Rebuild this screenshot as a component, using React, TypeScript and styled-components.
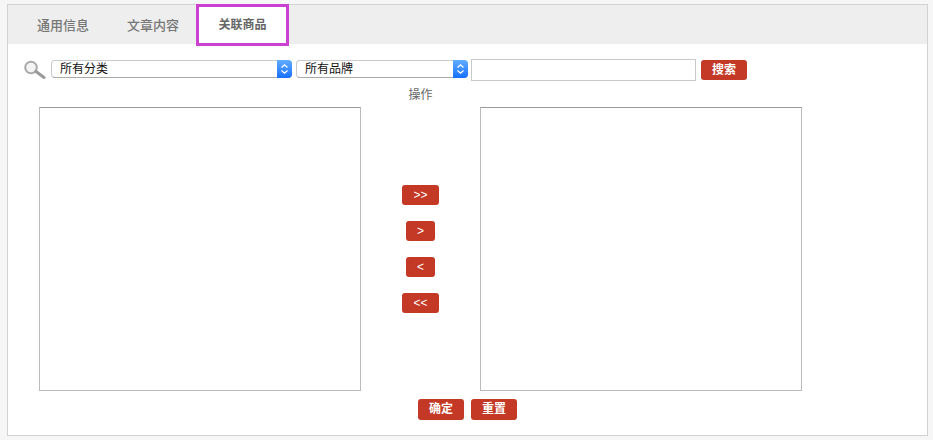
import styled, { createGlobalStyle } from "styled-components";

const GlobalStyle = createGlobalStyle`
  html, body {
    margin: 0;
    padding: 0;
    background: #f6f6f6;
    font-family: "Liberation Sans", "Noto Sans CJK SC", sans-serif;
  }
`;

const Panel = styled.div`
  box-sizing: border-box;
  width: 921px;
  height: 432px;
  margin: 4px 0 0 7px;
  border: 1px solid #d2d2d2;
  background: #fff;
`;

const TabBar = styled.div`
  display: flex;
  height: 39px;
  padding-left: 10px;
  background: #eeeeee;
`;

const Tab = styled.div<{ $active?: boolean }>`
  position: relative;
  box-sizing: border-box;
  width: ${(p) => (p.$active ? "93px" : "90px")};
  margin-left: ${(p) => (p.$active ? "-2px" : "0")};
  height: ${(p) => (p.$active ? "42px" : "39px")};
  margin-top: ${(p) => (p.$active ? "-1px" : "0")};
  border: ${(p) => (p.$active ? "3px solid #cb41d1" : "none")};
  background: ${(p) => (p.$active ? "#fff" : "transparent")};
  color: ${(p) => (p.$active ? "#666" : "#777")};
  font-size: ${(p) => (p.$active ? "12px" : "13px")};
  font-weight: ${(p) => (p.$active ? 700 : 500)};
  line-height: ${(p) => (p.$active ? "36px" : "42px")};
  text-align: center;
`;

const SearchRow = styled.div`
  display: flex;
  align-items: center;
  height: 22px;
  margin-top: 15px;
  padding-left: 15px;
`;

const SearchIcon = styled.svg`
  width: 23px;
  height: 20px;
  margin-right: 5px;
  flex: none;
`;

const SelectBox = styled.div<{ $width: number }>`
  position: relative;
  box-sizing: border-box;
  width: ${(p) => p.$width}px;
  height: 18px;
  margin: -2px 4px 0 0;
  padding-left: 8px;
  border: 1px solid #c9c9c9;
  border-bottom-color: #aaa;
  border-radius: 4px;
  background: #fff;
  color: #111;
  font-size: 12px;
  line-height: 16px;
`;

const SelectArrow = styled.span`
  position: absolute;
  top: -1px;
  right: -1px;
  display: flex;
  align-items: center;
  justify-content: center;
  width: 15px;
  height: 18px;
  border-radius: 0 4px 4px 0;
  background: linear-gradient(#63adff, #1670ff);
`;

const KeywordInput = styled.input`
  box-sizing: border-box;
  width: 225px;
  height: 22px;
  margin: 0 5px 0 -1px;
  padding: 0 4px;
  border: 1px solid #c9c9c9;
  background: #fff;
  outline: none;
`;

const RedButton = styled.button<{ $width: number; $thin?: boolean }>`
  box-sizing: border-box;
  width: ${(p) => p.$width}px;
  height: 20px;
  padding: 0;
  border: none;
  border-radius: 3px;
  background: #c43826;
  color: #fff;
  font-family: inherit;
  font-size: 12px;
  font-weight: ${(p) => (p.$thin ? 400 : 700)};
  line-height: 20px;
  text-align: center;
`;

const Transfer = styled.div`
  display: grid;
  grid-template-columns: 322px 119px 322px;
  grid-template-rows: 26px 284px;
  padding-left: 31px;
`;

const OperationLabel = styled.div`
  grid-column: 2;
  color: #666;
  font-size: 12px;
  line-height: 28px;
  text-align: center;
`;

const ListBox = styled.div<{ $column: number }>`
  grid-column: ${(p) => p.$column};
  grid-row: 2;
  box-sizing: border-box;
  border: 1px solid #bbb;
  border-top-color: #999;
  background: #fff;
`;

const MoveButtons = styled.div`
  grid-column: 2;
  grid-row: 2;
  display: flex;
  flex-direction: column;
  align-items: center;
  justify-content: center;
  gap: 16px;
`;

const Footer = styled.div`
  display: flex;
  justify-content: center;
  gap: 7px;
  margin-top: 8px;
`;

const FooterButton = styled(RedButton)`
  height: 21px;
  line-height: 21px;
`;

function Updown() {
  return (
    <svg width="9" height="12" viewBox="0 0 9 12" fill="none" stroke="#fff" strokeWidth="1.3">
      <path d="M1.5 4.5 4.5 1.8 7.5 4.5" />
      <path d="M1.5 7.5 4.5 10.2 7.5 7.5" />
    </svg>
  );
}

export default function App() {
  return (
    <>
      <GlobalStyle />
      <Panel>
        <TabBar>
          <Tab>通用信息</Tab>
          <Tab>文章内容</Tab>
          <Tab $active>关联商品</Tab>
        </TabBar>
        <SearchRow>
          <SearchIcon viewBox="0 0 23 20" fill="none">
            <circle cx="8" cy="7.5" r="5.8" stroke="#a8a8a8" strokeWidth="2" fill="#f4f4f4" />
            <path d="M13 11.5 21 17.5" stroke="#9a9a9a" strokeWidth="3" strokeLinecap="round" />
          </SearchIcon>
          <SelectBox $width={241}>
            所有分类
            <SelectArrow>
              <Updown />
            </SelectArrow>
          </SelectBox>
          <SelectBox $width={172}>
            所有品牌
            <SelectArrow>
              <Updown />
            </SelectArrow>
          </SelectBox>
          <KeywordInput />
          <RedButton $width={46}>搜索</RedButton>
        </SearchRow>
        <Transfer>
          <OperationLabel>操作</OperationLabel>
          <ListBox $column={1} />
          <MoveButtons>
            <RedButton $width={37} $thin>&gt;&gt;</RedButton>
            <RedButton $width={29} $thin>&gt;</RedButton>
            <RedButton $width={29} $thin>&lt;</RedButton>
            <RedButton $width={37} $thin>&lt;&lt;</RedButton>
          </MoveButtons>
          <ListBox $column={3} />
        </Transfer>
        <Footer>
          <FooterButton $width={46}>确定</FooterButton>
          <FooterButton $width={46}>重置</FooterButton>
        </Footer>
      </Panel>
    </>
  );
}
